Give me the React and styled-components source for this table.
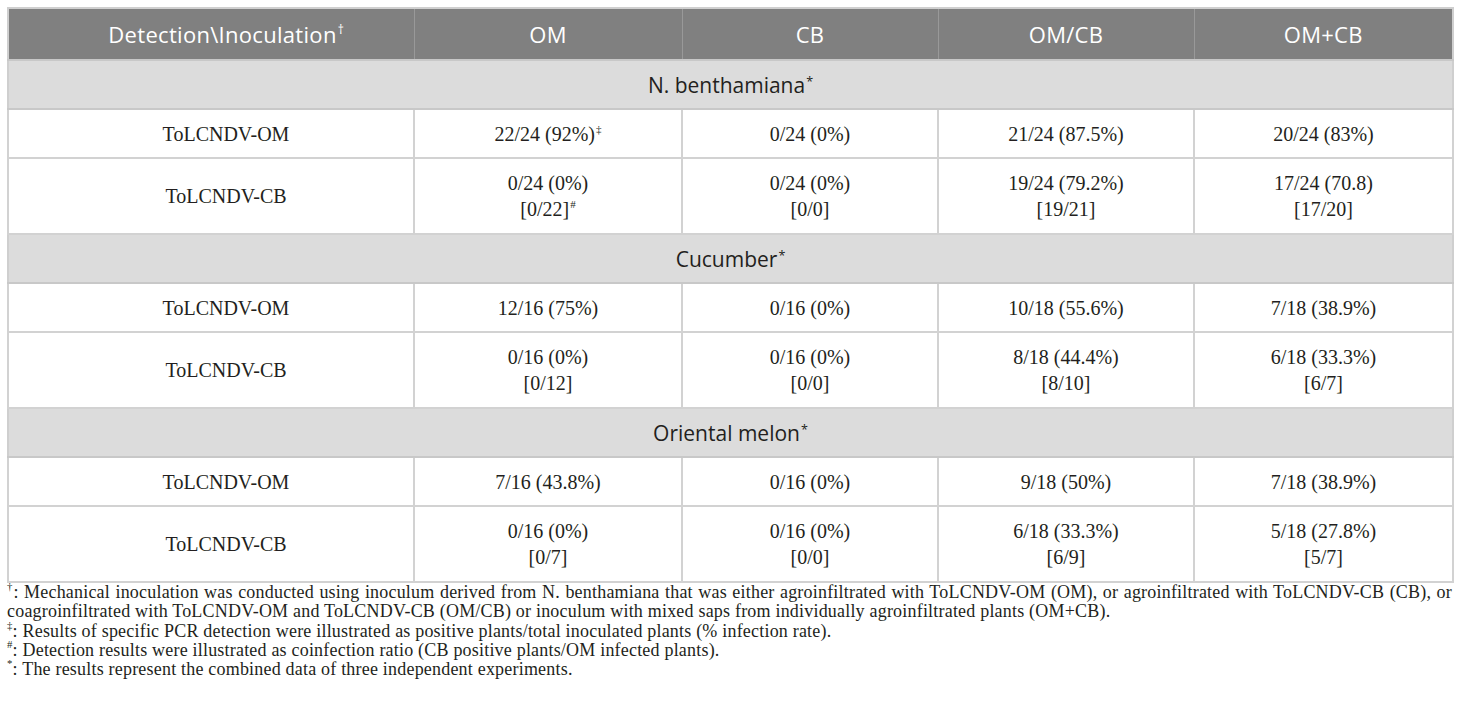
import React from "react";
import styled, { createGlobalStyle } from "styled-components";

const Global = createGlobalStyle`
  html, body { margin: 0; padding: 0; background: #fff; }
  body { font-family: "Liberation Serif", serif; color: #231f20; }
`;

const Page = styled.div`
  padding: 7px 8px 0 7px;
  width: 1445px;
`;

const Table = styled.table`
  width: 1445px;
  border-collapse: collapse;
  table-layout: fixed;
  border: 2px solid #cfcfcf;
`;

const HeadCell = styled.th`
  background: #808080;
  color: #fff;
  font-family: "Open Sans", sans-serif;
  font-weight: 400;
  font-size: 22px;
  letter-spacing: 0.3px;
  height: 50px;
  padding: 0 0 0 ${(p) => (p.$first ? "30px" : "0")};
  text-align: center;
  border-right: 1px solid #999;
  &:last-child { border-right: none; }
`;

const Sup = styled.sup`
  font-size: 0.55em;
  vertical-align: 0.75em;
  line-height: 0;
  margin-left: 1px;
`;

const SectionCell = styled.td`
  background: #dcdcdc;
  color: #231f20;
  font-family: "Open Sans", sans-serif;
  font-size: 21px;
  height: 47px;
  padding: 0;
  text-align: center;
  border-top: 2px solid #c8c8c8;
  border-bottom: 2px solid #c8c8c8;
`;

const Star = styled.span`
  font-size: 0.6em;
  vertical-align: 0.5em;
  line-height: 0;
  margin-left: 1px;
`;

const Cell = styled.td`
  font-family: "Liberation Serif", serif;
  font-size: 20px;
  line-height: 26px;
  text-align: center;
  padding: ${(p) => (p.$double ? "11px 0 11px" : "11px 0 10px")};
  padding-left: ${(p) => (p.$first ? "30px" : "0")};
  border: 2px solid #d2d2d2;
  color: #231f20;
`;

const Notes = styled.div`
  font-family: "Liberation Serif", serif;
  font-size: 18px;
  line-height: 19.3px;
  letter-spacing: 0.2px;
  color: #231f20;
`;

const Note = styled.p`
  margin: 0;
  white-space: nowrap;
`;

const JustifiedLine = styled.span`
  display: block;
  white-space: normal;
  text-align: justify;
  text-align-last: justify;
`;

const NoteMark = styled.sup`
  font-size: 0.6em;
  vertical-align: 0.7em;
  line-height: 0;
`;

const widths = [406, 268, 256, 256, 259];

const sections = [
  {
    title: "N. benthamiana",
    rows: [
      ["ToLCNDV-OM", [["22/24 (92%)", "‡"]], [["0/24 (0%)"]], [["21/24 (87.5%)"]], [["20/24 (83%)"]]],
      [
        "ToLCNDV-CB",
        [["0/24 (0%)"], ["[0/22]", "#"]],
        [["0/24 (0%)"], ["[0/0]"]],
        [["19/24 (79.2%)"], ["[19/21]"]],
        [["17/24 (70.8)"], ["[17/20]"]],
      ],
    ],
  },
  {
    title: "Cucumber",
    rows: [
      ["ToLCNDV-OM", [["12/16 (75%)"]], [["0/16 (0%)"]], [["10/18 (55.6%)"]], [["7/18 (38.9%)"]]],
      [
        "ToLCNDV-CB",
        [["0/16 (0%)"], ["[0/12]"]],
        [["0/16 (0%)"], ["[0/0]"]],
        [["8/18 (44.4%)"], ["[8/10]"]],
        [["6/18 (33.3%)"], ["[6/7]"]],
      ],
    ],
  },
  {
    title: "Oriental melon",
    rows: [
      ["ToLCNDV-OM", [["7/16 (43.8%)"]], [["0/16 (0%)"]], [["9/18 (50%)"]], [["7/18 (38.9%)"]]],
      [
        "ToLCNDV-CB",
        [["0/16 (0%)"], ["[0/7]"]],
        [["0/16 (0%)"], ["[0/0]"]],
        [["6/18 (33.3%)"], ["[6/9]"]],
        [["5/18 (27.8%)"], ["[5/7]"]],
      ],
    ],
  },
];

function Lines({ lines }) {
  return lines.map((l, i) => (
    <React.Fragment key={i}>
      {i > 0 && <br />}
      {l[0]}
      {l[1] && <Sup>{l[1]}</Sup>}
    </React.Fragment>
  ));
}

export default function App() {
  return (
    <>
      <Global />
      <Page>
        <Table>
          <colgroup>
            {widths.map((w, i) => (
              <col key={i} style={{ width: w }} />
            ))}
          </colgroup>
          <thead>
            <tr>
              <HeadCell $first>
                Detection\Inoculation<Sup>†</Sup>
              </HeadCell>
              <HeadCell>OM</HeadCell>
              <HeadCell>CB</HeadCell>
              <HeadCell>OM/CB</HeadCell>
              <HeadCell>OM+CB</HeadCell>
            </tr>
          </thead>
          <tbody>
            {sections.map((s) => (
              <React.Fragment key={s.title}>
                <tr>
                  <SectionCell colSpan={5}>
                    {s.title}
                    <Star>*</Star>
                  </SectionCell>
                </tr>
                {s.rows.map((r, ri) => {
                  const dbl = r[1].length > 1;
                  return (
                    <tr key={ri}>
                      <Cell $double={dbl} $first>
                        {r[0]}
                      </Cell>
                      {r.slice(1).map((c, ci) => (
                        <Cell key={ci} $double={dbl}>
                          <Lines lines={c} />
                        </Cell>
                      ))}
                    </tr>
                  );
                })}
              </React.Fragment>
            ))}
          </tbody>
        </Table>
        <Notes>
          <Note>
            <JustifiedLine>
              <NoteMark>†</NoteMark>: Mechanical inoculation was conducted using inoculum derived from N. benthamiana
              that was either agroinfiltrated with ToLCNDV-OM (OM), or agroinfiltrated with ToLCNDV-CB (CB), or
            </JustifiedLine>
            coagroinfiltrated with ToLCNDV-OM and ToLCNDV-CB (OM/CB) or inoculum with mixed saps from individually
            agroinfiltrated plants (OM+CB).
          </Note>
          <Note>
            <NoteMark>‡</NoteMark>: Results of specific PCR detection were illustrated as positive plants/total inoculated
            plants (% infection rate).
          </Note>
          <Note>
            <NoteMark>#</NoteMark>: Detection results were illustrated as coinfection ratio (CB positive plants/OM infected
            plants).
          </Note>
          <Note>
            <NoteMark>*</NoteMark>: The results represent the combined data of three independent experiments.
          </Note>
        </Notes>
      </Page>
    </>
  );
}
